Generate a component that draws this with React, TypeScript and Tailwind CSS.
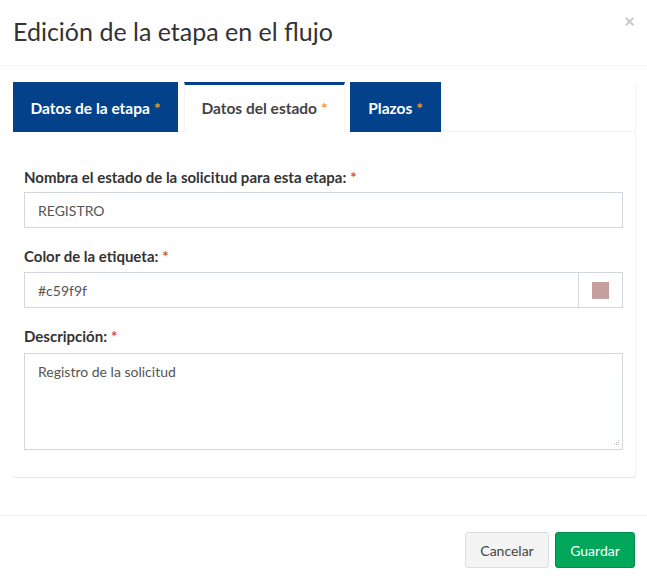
import React from "react";

const font = { fontFamily: "Lato, 'Noto Sans', sans-serif" };

const Req = ({ tone = "red" }: { tone?: "red" | "orange" }) => (
  <span className={tone === "red" ? "ml-[4px] text-[#dd4b39]" : "ml-[4px] text-[#f39c12]"}>*</span>
);

const App = () => {
  const tabs = [
    { title: "Datos de la etapa", active: false, w: "w-[165px]" },
    { title: "Datos del estado", active: true, w: "w-[161px]" },
    { title: "Plazos", active: false, w: "w-[91px]" },
  ];

  return (
    <div className="w-[647px] h-[581px] bg-white text-[#333]" style={font}>
      {/* Encabezado */}
      <div className="h-[66px] border-b border-[#f4f4f4] flex items-center justify-between pl-[13px] pr-[12px]">
        <h4 className="mb-[4px] text-[25px] leading-[30px] text-[#333] font-normal">Edición de la etapa en el flujo</h4>
        <button className="self-start mt-[11px] text-[19px] font-bold leading-none text-[#c6c6c6]">×</button>
      </div>

      {/* Cuerpo */}
      <div className="pl-[13px] pr-[11px] pt-[16px] pb-[38px] border-b border-[#f4f4f4]">
        <div className="bg-white rounded-[3px] shadow-[0_1px_1px_rgba(0,0,0,0.1)] border-r border-[#f4f4f4]">
          <ul className="flex border-b border-[#f4f4f4] h-[50px]">
            {tabs.map((t, i) => (
              <li
                key={t.title}
                className={`${t.w} ${i === 1 ? "ml-[6px] mr-[5px]" : ""} h-[50px] flex items-center justify-center text-[15.5px] font-bold ${
                  t.active
                    ? "pt-[1px] border-t-[3px] border-[#03428a] border-x border-x-[#f4f4f4] bg-white text-[#444]"
                    : "pt-[4px] bg-[#03428a] text-white"
                }`}
              >
                <span>{t.title}</span>
                <Req tone="orange" />
              </li>
            ))}
          </ul>

          <div className="pl-[11px] pr-[12px] pt-[35px] pb-[27px]">
            <div className="mb-[18px]">
              <label className="block h-5 leading-5 mb-[5px] text-[15px] font-bold text-[#333]">
                Nombra el estado de la solicitud para esta etapa:
                <Req />
              </label>
              <div className="h-[36px] border border-[#d2d6de] flex items-center pl-[13px] text-[14px] text-[#555]">
                REGISTRO
              </div>
            </div>

            <div className="mb-[18px]">
              <label className="block h-5 leading-5 mb-[6px] text-[15px] font-bold text-[#333]">
                Color de la etiqueta:
                <Req />
              </label>
              <div className="h-[36px] border border-[#d2d6de] flex text-[14px] text-[#555]">
                <div className="flex-1 flex items-center pl-[13px]">#c59f9f</div>
                <div className="w-[44px] border-l border-[#d2d6de] flex items-center justify-center">
                  <span className="block w-[17px] h-[17px] bg-[#c59f9f]" />
                </div>
              </div>
            </div>

            <div>
              <label className="block h-5 leading-5 mb-[7px] text-[15px] font-bold text-[#333]">
                Descripción:
                <Req />
              </label>
              <div className="relative h-[97px] border border-[#d2d6de] pl-[13px] pt-[7px] text-[14px] text-[#555]">
                Registro de la solicitud
                <svg className="absolute right-[2px] bottom-[2px]" width="8" height="8" viewBox="0 0 8 8">
                  <g fill="#b5b5b5">
                    <rect x="6" y="1" width="1" height="1" />
                    <rect x="4" y="3" width="1" height="1" />
                    <rect x="6" y="3" width="1" height="1" />
                    <rect x="2" y="5" width="1" height="1" />
                    <rect x="4" y="5" width="1" height="1" />
                    <rect x="6" y="5" width="1" height="1" />
                  </g>
                </svg>
              </div>
            </div>
          </div>
        </div>
      </div>

      {/* Pie */}
      <div className="flex justify-end gap-[6px] pt-[16px] pr-[12px]">
        <button className="h-[36px] w-[84px] rounded-[3px] border border-[#ddd] bg-[#f4f4f4] text-[14px] text-[#444]">
          Cancelar
        </button>
        <button className="h-[36px] w-[80px] rounded-[3px] border border-[#008d4c] bg-[#00a65a] text-[14px] text-white">
          Guardar
        </button>
      </div>
    </div>
  );
};

export default App;
